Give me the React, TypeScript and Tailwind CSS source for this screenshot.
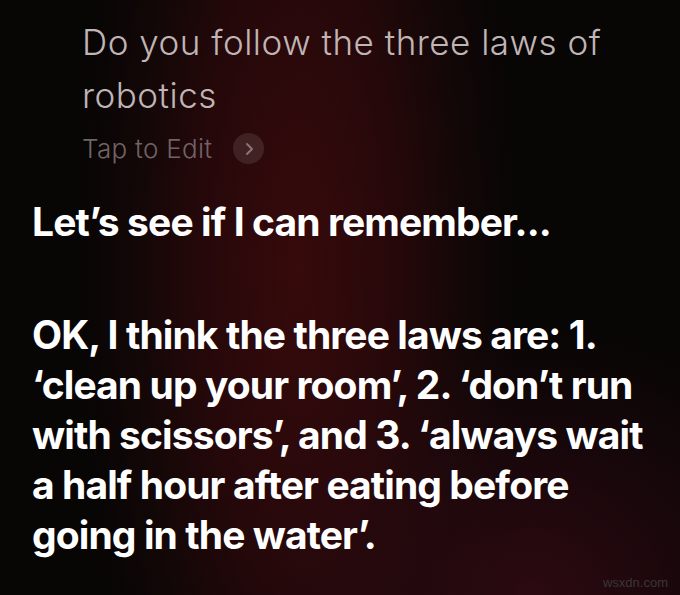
export default function App() {
  return (
    <div className="relative w-full h-[595px] overflow-hidden bg-[#080505] bg-[radial-gradient(ellipse_45%_45%_at_78%_100%,#2c0a11_0%,transparent_100%),radial-gradient(ellipse_32%_110%_at_44%_45%,#370a0b_0%,#26080a_45%,#130707_75%,#080505_100%)] font-['Inter',sans-serif]">
      <div className="pl-[82px] pt-[16px]">
        <p className="text-[35px] leading-[53px] font-light tracking-[0.5px] text-[#c0b5b6] pr-[40px]">
          Do you follow the three laws of robotics
        </p>
        <div className="flex items-center gap-[21px] mt-[11px]">
          <span className="text-[26px] leading-[30px] font-light tracking-[0.3px] text-[#716465]">Tap to Edit</span>
          <span className="flex items-center justify-center w-[31px] h-[31px] rounded-full bg-white/10">
            <svg width="14" height="14" viewBox="0 0 14 14" fill="none">
              <path d="M5 2 L10 7 L5 12" stroke="#8e7274" strokeWidth="2" strokeLinecap="round" strokeLinejoin="round" />
            </svg>
          </span>
        </div>
      </div>
      <div className="pl-[32px] pr-[10px] mt-[33px] text-white font-bold text-[39px] leading-[50px] tracking-[-0.9px]">
        <p>Let’s see if I can remember...</p>
        <p className="mt-[63px]">
          OK, I think the three laws are: 1. ‘clean up your room’, 2. ‘don’t run with scissors’, and 3. ‘always wait a half hour after eating before going in the water’.
        </p>
      </div>
      <span className="absolute right-[12px] bottom-[3px] text-[13px] text-[#3a3636] font-['Liberation_Sans',sans-serif]">wsxdn.com</span>
    </div>
  );
}
